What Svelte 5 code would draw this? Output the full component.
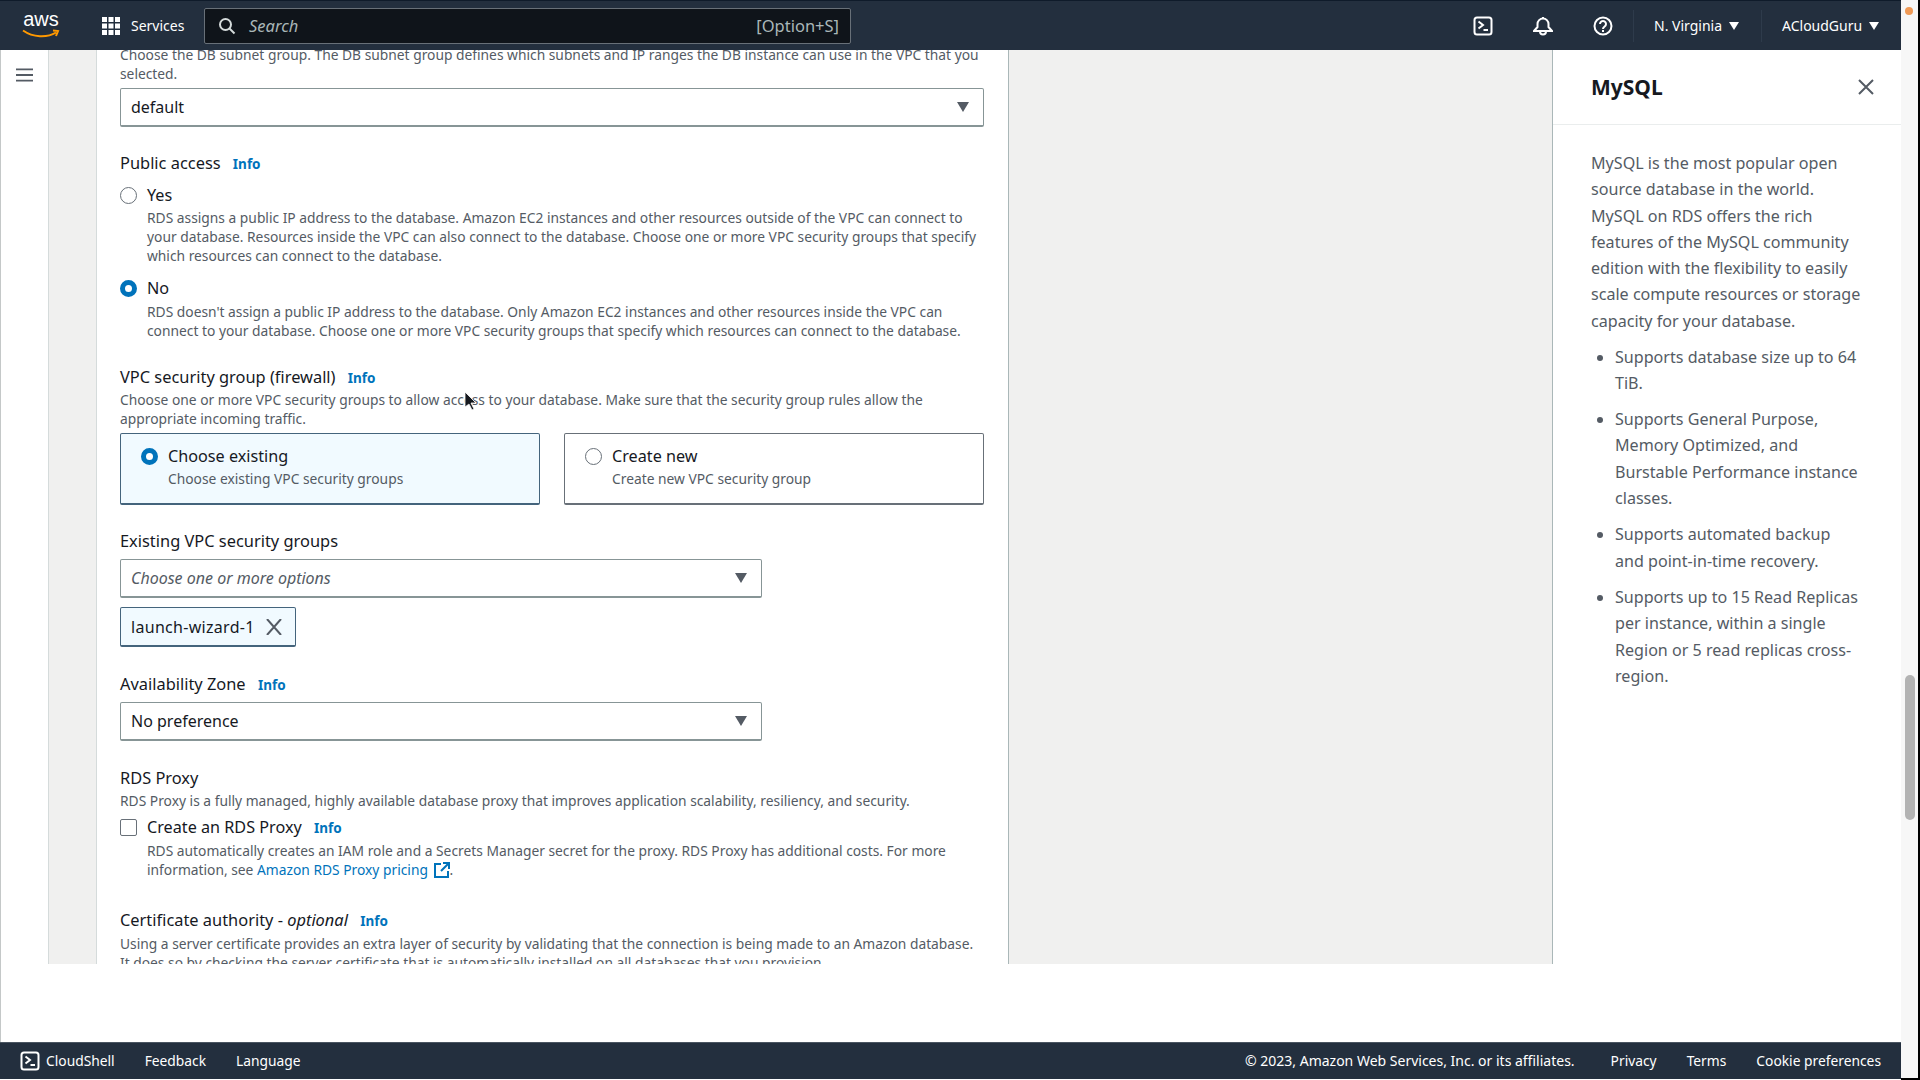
<script>
  const features = [
    'Supports database size up to 64 TiB.',
    'Supports General Purpose, Memory Optimized, and Burstable Performance instance classes.',
    'Supports automated backup and point-in-time recovery.',
    'Supports up to 15 Read Replicas per instance, within a single Region or 5 read replicas cross-region.'
  ];
</script>

{#snippet caret()}
  <svg class="caret" viewBox="0 0 14 12" aria-hidden="true"><path d="M1 1h12L7 11z" fill="#545b64" /></svg>
{/snippet}

{#snippet small_caret()}
  <svg class="small-caret" viewBox="0 0 10 8" aria-hidden="true"><path d="M0 0h10L5 8z" fill="#fff" /></svg>
{/snippet}

{#snippet shell()}
  <svg class="nav-icon" viewBox="0 0 20 20" fill="none" stroke="#fff" aria-hidden="true">
    <rect x="1.5" y="1.5" width="17" height="17" rx="2.5" stroke-width="2" />
    <path d="M5.5 5.5 10 9l-4.5 3.5M10.5 14H15" stroke-width="2" />
  </svg>
{/snippet}

<div class="page">
  <div class="app">
    <header class="topbar">
      <div class="logo">
        <span class="logo-text">aws</span>
        <svg viewBox="0 0 38 10" aria-hidden="true"><path d="M1 1.5c10 7 24 7.500 33 2M31 1.500l5 .5-2 5" fill="none" stroke="#f90" stroke-width="2" /></svg>
      </div>
      <svg class="grid-icon" viewBox="0 0 18 18" fill="#fff" aria-hidden="true">
        <rect x="0" y="0" width="5" height="5" /><rect x="6.500" y="0" width="5" height="5" /><rect x="13" y="0" width="5" height="5" />
        <rect x="0" y="6.500" width="5" height="5" /><rect x="6.500" y="6.500" width="5" height="5" /><rect x="13" y="6.500" width="5" height="5" />
        <rect x="0" y="13" width="5" height="5" /><rect x="6.500" y="13" width="5" height="5" /><rect x="13" y="13" width="5" height="5" />
      </svg>
      <span class="services">Services</span>
      <div class="search">
        <svg viewBox="0 0 18 18" fill="none" stroke="#d5dbdb" stroke-width="2" aria-hidden="true"><circle cx="7.500" cy="7.500" r="5.500" /><path d="m11.500 11.500 5 5" /></svg>
        <em>Search</em>
        <span>[Option+S]</span>
      </div>
      <div class="tools">
        <div class="tool">{@render shell()}</div>
        <div class="tool">
          <svg class="nav-icon bell" viewBox="0 0 20 20" fill="none" stroke="#fff" stroke-width="2" aria-hidden="true">
            <path d="M1 15h18l-3.500-4V8a5.500 5.500 0 0 0-11 0v3zM7 15.500a3 3 0 0 0 6 0M10 1v2" />
          </svg>
        </div>
        <div class="tool">
          <svg class="nav-icon" viewBox="0 0 20 20" fill="none" stroke="#fff" stroke-width="2" aria-hidden="true">
            <circle cx="10" cy="10" r="8.500" /><path d="M7 8a3 3 0 1 1 4.500 2.600c-1 .6-1.500 1.100-1.500 2.400M10 14v2" />
          </svg>
        </div>
        <div class="menu region">N. Virginia {@render small_caret()}</div>
        <div class="menu account">ACloudGuru {@render small_caret()}</div>
      </div>
    </header>

    <div class="main">
      <nav class="sidenav">
        <svg viewBox="0 0 18 14" fill="none" stroke="#545b64" stroke-width="2" aria-hidden="true"><path d="M0 1h18M0 7h18M0 13h18" /></svg>
      </nav>
      <div class="rail"></div>

      <section class="content">
        <p class="desc top-desc">Choose the DB subnet group. The DB subnet group defines which subnets and IP ranges the DB instance can use in the VPC that you selected.</p>
        <div class="select first-select"><span>default</span>{@render caret()}</div>

        <div class="label public-label">Public access <a href="#info">Info</a></div>
        <div class="option yes">
          <span class="radio"></span>
          <div>
            <div class="option-title">Yes</div>
            <p class="desc">RDS assigns a public IP address to the database. Amazon EC2 instances and other resources outside of the VPC can connect to your database. Resources inside the VPC can also connect to the database. Choose one or more VPC security groups that specify which resources can connect to the database.</p>
          </div>
        </div>
        <div class="option no">
          <span class="radio checked"></span>
          <div>
            <div class="option-title">No</div>
            <p class="desc">RDS doesn't assign a public IP address to the database. Only Amazon EC2 instances and other resources inside the VPC can connect to your database. Choose one or more VPC security groups that specify which resources can connect to the database.</p>
          </div>
        </div>

        <div class="label vpc-label">VPC security group (firewall) <a href="#info">Info</a></div>
        <p class="desc vpc-desc">Choose one or more VPC security groups to allow access to your database. Make sure that the security group rules allow the appropriate incoming traffic.</p>
        <div class="cards">
          <div class="card selected">
            <span class="radio checked"></span>
            <div>
              <div class="option-title">Choose existing</div>
              <p class="desc">Choose existing VPC security groups</p>
            </div>
          </div>
          <div class="card">
            <span class="radio"></span>
            <div>
              <div class="option-title">Create new</div>
              <p class="desc">Create new VPC security group</p>
            </div>
          </div>
        </div>

        <div class="label existing-label">Existing VPC security groups</div>
        <div class="select short"><em>Choose one or more options</em>{@render caret()}</div>
        <div class="token">
          <span>launch-wizard-1</span>
          <svg viewBox="0 0 16 16" fill="none" stroke="#545b64" stroke-width="2" aria-hidden="true"><path d="m1 0 14 16M15 0 1 16" /></svg>
        </div>

        <div class="label az-label">Availability Zone <a href="#info">Info</a></div>
        <div class="select short"><span>No preference</span>{@render caret()}</div>

        <div class="label proxy-label">RDS Proxy</div>
        <p class="desc after-label">RDS Proxy is a fully managed, highly available database proxy that improves application scalability, resiliency, and security.</p>
        <div class="option check">
          <span class="checkbox"></span>
          <div>
            <div class="option-title">Create an RDS Proxy <a href="#info">Info</a></div>
            <p class="desc">RDS automatically creates an IAM role and a Secrets Manager secret for the proxy. RDS Proxy has additional costs. For more information, see <a class="plain" href="#pricing">Amazon RDS Proxy pricing</a> <svg class="external" viewBox="0 0 16 16" fill="none" stroke="#0073bb" stroke-width="2" aria-hidden="true"><path d="M7 2H1v13h13V9M9 1h6v6M15 1 7 9" /></svg>.</p>
          </div>
        </div>

        <div class="label cert-label">Certificate authority - <em>optional</em> <a href="#info">Info</a></div>
        <p class="desc after-label">Using a server certificate provides an extra layer of security by validating that the connection is being made to an Amazon database. It does so by checking the server certificate that is automatically installed on all databases that you provision.</p>
      </section>

      <div class="filler"></div>

      <aside class="panel">
        <div class="panel-head">
          <h2>MySQL</h2>
          <svg viewBox="0 0 18 18" fill="none" stroke="#545b64" stroke-width="2" aria-hidden="true"><path d="m2 2 14 14M16 2 2 16" /></svg>
        </div>
        <div class="panel-body">
          <p>MySQL is the most popular open source database in the world. MySQL on RDS offers the rich features of the MySQL community edition with the flexibility to easily scale compute resources or storage capacity for your database.</p>
          <ul>
            {#each features as item}
              <li>{item}</li>
            {/each}
          </ul>
        </div>
      </aside>
    </div>

    <div class="gap"></div>

    <footer class="footer">
      <div class="foot-item shell-link">{@render shell()} CloudShell</div>
      <span class="foot-item feedback">Feedback</span>
      <span class="foot-item">Language</span>
      <span class="copyright">© 2023, Amazon Web Services, Inc. or its affiliates.</span>
      <span class="foot-item privacy">Privacy</span>
      <span class="foot-item terms">Terms</span>
      <span class="foot-item">Cookie preferences</span>
    </footer>
  </div>

  <div class="scrollbar"><span class="dot"></span><span class="thumb"></span></div>

  <svg class="pointer" viewBox="0 0 12 20" aria-hidden="true"><path d="M1 1v15l4-3 3 6 2-1-3-6h5z" fill="#16191f" stroke="#fff" stroke-width=".8" /></svg>
</div>

<style>
  :global(body) {
    margin: 0;
    background: #fff;
  }

  .page {
    display: flex;
    position: relative;
    width: 1920px;
    height: 1080px;
    overflow: hidden;
    background: #000;
    font-family: "Noto Sans", sans-serif;
    color: #16191f;
  }

  .app {
    display: flex;
    flex-direction: column;
    width: 1901px;
    background: #fff;
  }

  p {
    margin: 0;
  }

  a {
    color: #0073bb;
    text-decoration: none;
  }

  .topbar {
    display: flex;
    align-items: center;
    flex: none;
    height: 49px;
    padding-left: 22px;
    background: #232f3e;
    border-top: 1px solid #0f1b2a;
    color: #fff;
    font-size: 14px;
  }

  .logo {
    display: flex;
    flex-direction: column;
    align-items: center;
    width: 38px;
    height: 34px;
  }

  .logo-text {
    font-family: "Liberation Sans", sans-serif;
    font-size: 20px;
    line-height: 20px;
  }

  .logo svg {
    width: 38px;
    height: 10px;
  }

  .grid-icon {
    width: 18px;
    height: 18px;
    margin-left: 42px;
  }

  .services {
    margin-left: 11px;
    width: 54px;
  }

  .search {
    display: flex;
    align-items: center;
    box-sizing: border-box;
    width: 647px;
    height: 36px;
    margin-left: 19px;
    padding: 0 11px 0 13px;
    background: #0f141a;
    border: 1px solid #687078;
    border-radius: 2px;
    color: #aab7b8;
    font-size: 16.500px;
  }

  .search svg {
    width: 18px;
    height: 18px;
    margin-right: 13px;
  }

  .search span {
    margin-left: auto;
  }

  .tools {
    display: flex;
    align-items: center;
    margin-left: 602px;
    height: 100%;
  }

  .tool {
    display: flex;
    align-items: center;
    justify-content: center;
    width: 60px;
    height: 32px;
  }

  .nav-icon {
    width: 20px;
    height: 20px;
  }

  .menu {
    display: flex;
    align-items: center;
    gap: 7px;
    height: 32px;
    white-space: nowrap;
  }

  .region {
    width: 107px;
    padding-left: 20px;
    border-left: 1px solid #2e3b4b;
  }

  .account {
    padding-left: 20px;
    border-left: 1px solid #2e3b4b;
  }

  .small-caret {
    width: 10px;
    height: 8px;
  }

  .main {
    display: flex;
    flex: none;
    height: 914px;
    overflow: hidden;
  }

  .sidenav {
    flex: none;
    box-sizing: border-box;
    width: 49px;
    padding: 18px 0 0 15px;
    border-left: 1px solid #c4c8c8;
  }

  .sidenav svg {
    display: block;
    width: 17px;
    height: 14px;
  }

  .rail {
    flex: none;
    width: 47px;
    background: #f0f0ef;
    border-left: 1px solid #d5dbdb;
    margin-left: -1px;
  }

  .content {
    flex: none;
    box-sizing: border-box;
    width: 913px;
    height: 914px;
    padding: 0 24px 0 23px;
    overflow: hidden;
    background: #fff;
    border-left: 1px solid #d5dbdb;
    border-right: 1px solid #aab7b8;
  }

  .desc {
    font-size: 13.800px;
    line-height: 19px;
    color: #545b64;
  }

  .top-desc {
    margin-top: -5px;
  }

  .label {
    font-size: 16.400px;
    line-height: 22px;
    color: #16191f;
  }

  .option-title {
    font-size: 16.200px;
    line-height: 22px;
    color: #16191f;
  }

  .label a,
  .option-title a {
    margin-left: 8px;
    font-size: 13.500px;
    font-weight: 700;
  }

  .select {
    display: flex;
    align-items: center;
    justify-content: space-between;
    box-sizing: border-box;
    height: 39px;
    padding: 0 13px 0 10px;
    border: 1px solid #879596;
    border-bottom-width: 2px;
    border-radius: 2px;
    font-size: 16px;
  }

  .select em {
    color: #545b64;
  }

  .first-select {
    margin-top: 5px;
  }

  .short {
    width: 642px;
  }

  .caret {
    width: 14px;
    height: 12px;
  }

  .public-label {
    margin-top: 25px;
  }

  .option {
    display: flex;
    gap: 10px;
  }

  .option .desc,
  .card .desc,
  .after-label {
    margin-top: 2px;
  }

  .option.no .desc {
    margin-top: 3px;
  }

  .yes {
    margin-top: 9px;
  }

  .no {
    margin-top: 11.500px;
  }

  .radio,
  .checkbox {
    flex: none;
    box-sizing: border-box;
    width: 17px;
    height: 17px;
    margin-top: 3px;
    background: #fff;
    border: 1px solid #687078;
    border-radius: 50%;
  }

  .checkbox {
    border-radius: 2px;
  }

  .radio.checked {
    border: 5px solid #0073bb;
  }

  .vpc-label {
    margin-top: 26.500px;
  }

  .vpc-desc {
    margin-top: 1px;
  }

  .cards {
    display: grid;
    grid-template-columns: 420px 420px;
    gap: 24px;
    margin-top: 5px;
  }

  .card {
    display: flex;
    gap: 10px;
    box-sizing: border-box;
    height: 72px;
    padding: 11px 20px;
    border: 1px solid #687078;
    border-bottom-width: 2px;
    border-radius: 2px;
  }

  .card.selected {
    background: #f1faff;
    border-color: #44647c;
  }

  .existing-label {
    margin-top: 25px;
  }

  .existing-label + .select {
    margin-top: 7px;
  }

  .token {
    display: flex;
    align-items: center;
    gap: 11px;
    box-sizing: border-box;
    width: 176px;
    height: 40px;
    margin-top: 9px;
    padding: 0 10px;
    background: #f1faff;
    border: 1px solid #44647c;
    border-bottom-width: 2px;
    border-radius: 2px;
    font-size: 16px;
    letter-spacing: .3px;
  }

  .token svg {
    width: 16px;
    height: 16px;
  }

  .az-label {
    margin-top: 26px;
  }

  .az-label + .select {
    margin-top: 6px;
  }

  .proxy-label {
    margin-top: 25.500px;
  }

  .check {
    margin-top: 6.500px;
  }

  .plain {
    color: #0073bb;
  }

  .external {
    width: 16px;
    height: 16px;
    margin-left: 2px;
    vertical-align: -3px;
  }

  .cert-label {
    margin-top: 30px;
  }

  .filler {
    flex: 1;
    background: #f0f0ef;
  }

  .panel {
    flex: none;
    box-sizing: border-box;
    width: 349px;
    border-left: 1px solid #aab7b8;
    background: #fff;
  }

  .panel-head {
    display: flex;
    align-items: center;
    justify-content: space-between;
    box-sizing: border-box;
    height: 75px;
    padding: 0 26px 0 38px;
    border-bottom: 1px solid #eaeded;
  }

  h2 {
    margin: 0;
    font-size: 21px;
    font-weight: 700;
  }

  .panel-head svg {
    width: 18px;
    height: 18px;
  }

  .panel-body {
    padding: 25px 40px 0 38px;
    font-size: 16.100px;
    line-height: 26.300px;
    color: #545b64;
  }

  ul {
    margin: 9.500px 0 0;
    padding-left: 24px;
  }

  li {
    margin-bottom: 10px;
  }

  .gap {
    flex: none;
    box-sizing: border-box;
    height: 78px;
    background: #fff;
    border-left: 1px solid #c4c8c8;
  }

  .footer {
    display: flex;
    align-items: center;
    flex: none;
    box-sizing: border-box;
    height: 37px;
    padding: 0 20px 1px;
    background: #232f3e;
    border-top: 1px solid #4a5561;
    color: #fff;
    font-size: 13.800px;
  }

  .shell-link {
    display: flex;
    align-items: center;
    gap: 6px;
  }

  .feedback {
    margin: 0 30px;
  }

  .copyright {
    margin-left: auto;
    font-size: 14px;
  }

  .privacy {
    margin-left: 36px;
  }

  .terms {
    margin: 0 30px;
  }

  .scrollbar {
    position: relative;
    flex: none;
    width: 17px;
    height: 1078px;
    background: #f7f7f7;
  }

  .dot {
    position: absolute;
    top: 7px;
    left: 4px;
    width: 8px;
    height: 8px;
    border-radius: 50%;
    background: #ec7211;
    opacity: .7;
  }

  .thumb {
    position: absolute;
    top: 675px;
    left: 4px;
    width: 10px;
    height: 145px;
    border-radius: 5px;
    background: #b3b3b3;
  }

  .pointer {
    position: absolute;
    top: 391px;
    left: 464px;
    width: 12px;
    height: 20px;
  }
</style>
